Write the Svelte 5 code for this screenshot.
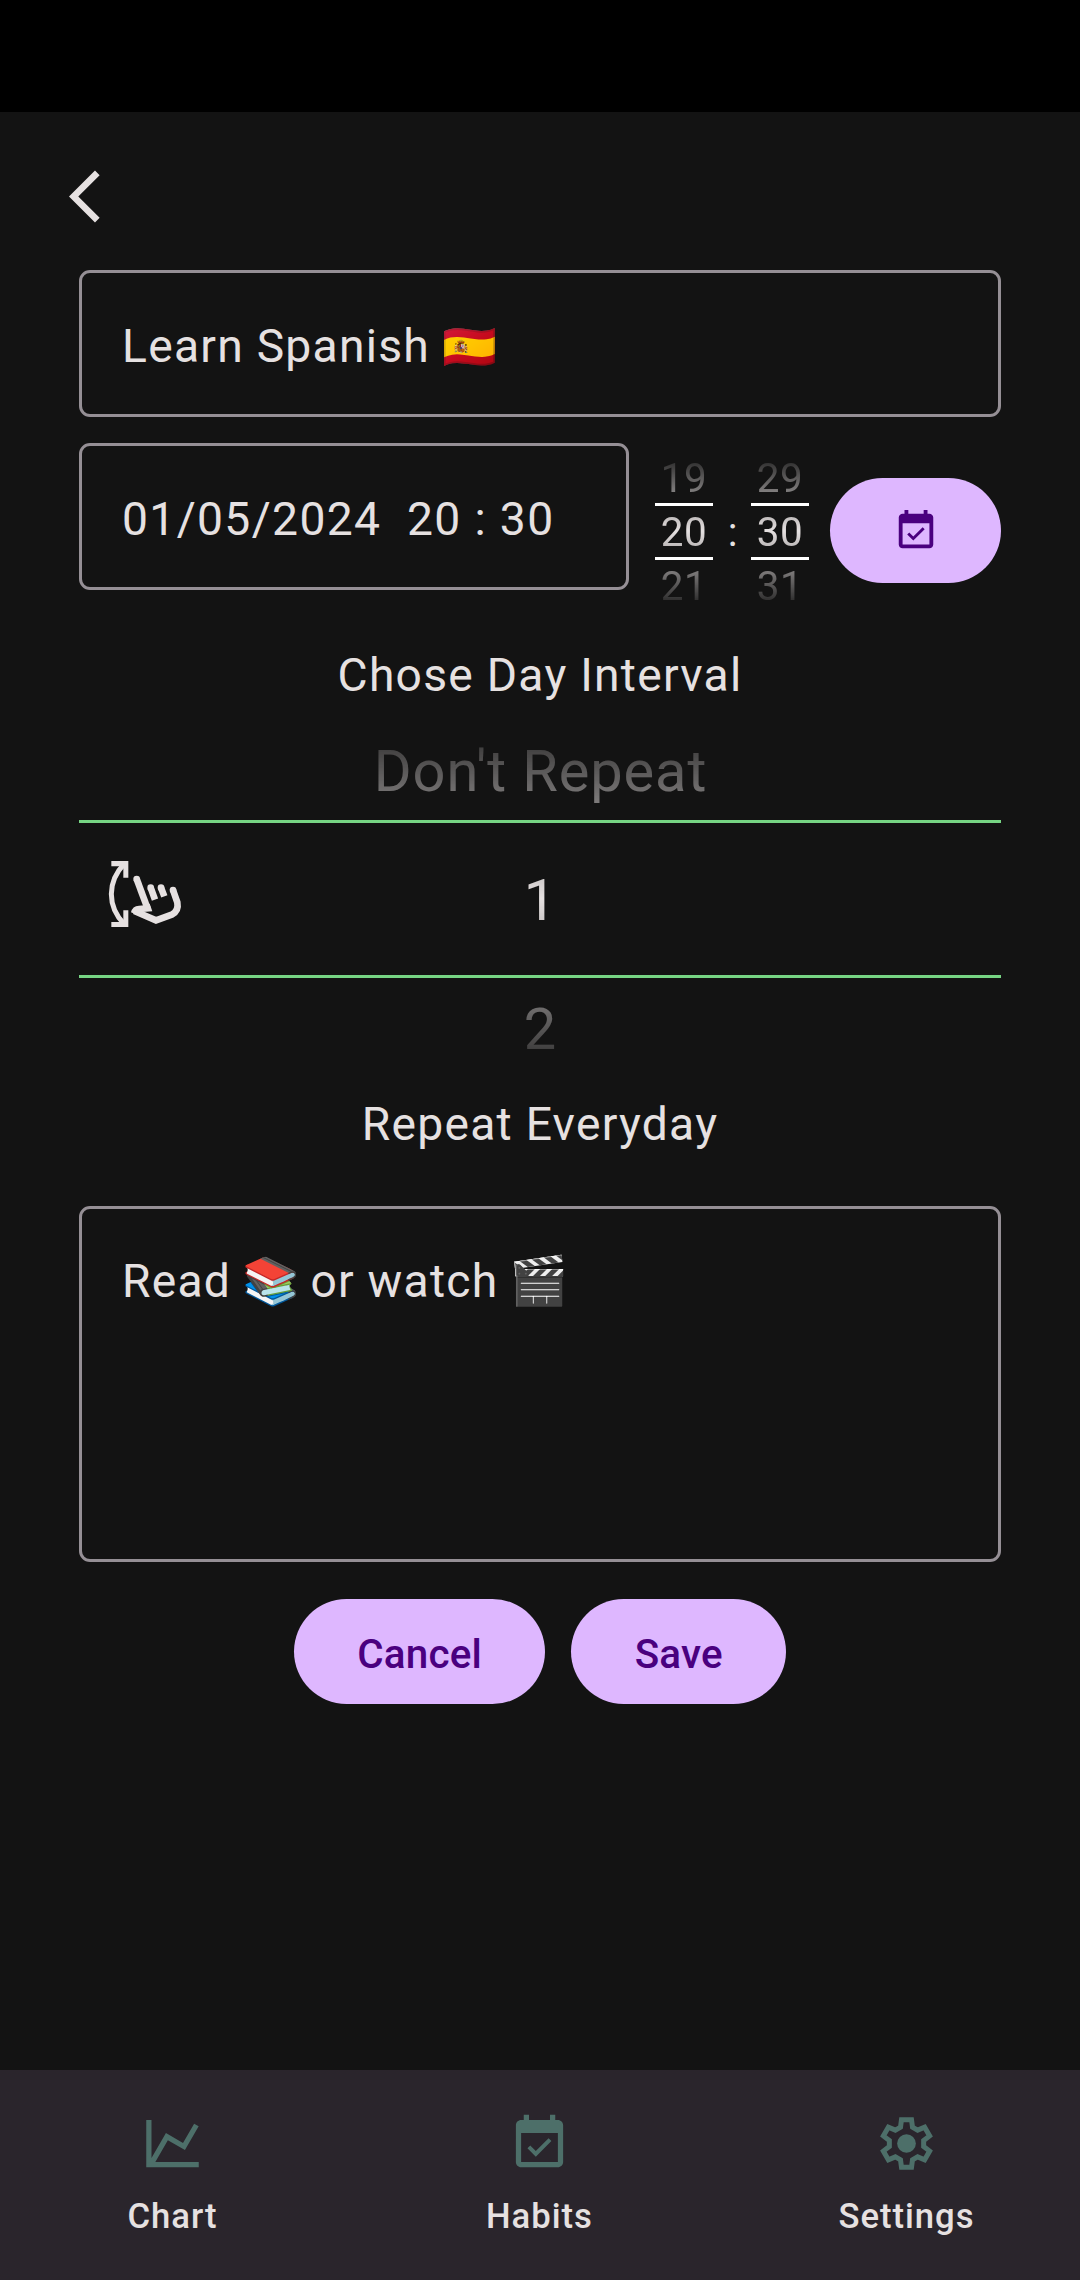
<script>
  const hours = ['19', '20', '21'];
  const minutes = ['29', '30', '31'];
  const intervals = ["Don't Repeat", '1', '2'];

  // Six-toothed gear outline, one tooth rotated in 60° steps.
  const tooth = [[-18, -49], [-15, -71.5], [15, -71.5], [18, -49]];
  const gear = [0, 60, 120, 180, 240, 300]
    .flatMap((deg) => {
      const a = (deg * Math.PI) / 180;
      return tooth.map(([x, y]) =>
        `${(x * Math.cos(a) - y * Math.sin(a)).toFixed(2)},${(x * Math.sin(a) + y * Math.cos(a)).toFixed(2)}`
      );
    })
    .join(' ');
</script>

{#snippet calendar()}
  <svg class="calendar" viewBox="0 0 24 24" fill="currentColor">
    <path d="M16.53 11.06L15.47 10l-4.88 4.88-2.12-2.12-1.06 1.06L10.59 17l5.94-5.94zM19 3h-1V1h-2v2H8V1H6v2H5c-1.11 0-1.99.9-1.99 2L3 19c0 1.1.89 2 2 2h14c1.1 0 2-.9 2-2V5c0-1.1-.9-2-2-2zm0 16H5V8h14v11z" />
  </svg>
{/snippet}

{#snippet wheel(values)}
  <div class="wheel">
    <div class="values">
      {#each values as value}<span>{value}</span>{/each}
    </div>
    <div class="window"></div>
  </div>
{/snippet}

<div class="screen">
  <div class="status"></div>
  <main>
    <button class="back" aria-label="Back">
      <svg viewBox="0 0 24 24" fill="currentColor"><path d="M11.67 3.87L9.9 2.1 0 12l9.9 9.9 1.77-1.77L3.54 12z" /></svg>
    </button>

    <div class="field title">Learn Spanish <span class="emoji flag">🇪🇸</span></div>

    <div class="when">
      <div class="field date">01/05/2024&nbsp; 20 : 30</div>
      <div class="time">
        {@render wheel(hours)}
        <span class="colon">:</span>
        {@render wheel(minutes)}
      </div>
      <button class="pill pick" aria-label="Pick date">{@render calendar()}</button>
    </div>

    <h2 class="heading">Chose Day Interval</h2>

    <div class="interval">
      {@render wheel(intervals)}
      <svg class="swipe" viewBox="140 235 230 210" fill="currentColor">
        <path d="M153 244H204V294H189V260H153Z" />
        <path d="M153 442H204V392H189V427H153Z" />
        <g fill="none" stroke="currentColor">
          <path d="M192 252C140 306 140 380 192 434" stroke-width="15" />
          <path d="M271 324L284 360M302 324L312 350" stroke-width="20" />
          <path d="M229 298L263 390" stroke-width="20" />
          <path d="M338 331L351 368Q356 394 334 405L287 422L222 394" stroke-width="20" />
        </g>
        <circle cx="229" cy="298" r="10" />
        <circle cx="271" cy="324" r="10" />
        <circle cx="302" cy="324" r="10" />
        <circle cx="338" cy="331" r="10" />
        <path d="M212 398Q216 379 236 378L252 377L268 372L276 395L248 397L226 404Z" />
      </svg>
    </div>

    <p class="heading summary">Repeat Everyday</p>

    <div class="field note">Read <span class="emoji">📚</span> or watch <span class="emoji clapper">🎬</span></div>

    <div class="actions">
      <button class="pill">Cancel</button>
      <button class="pill">Save</button>
    </div>
  </main>

  <nav>
    <div class="tab">
      <svg viewBox="0 0 24 24" fill="currentColor"><path d="M16 11.78L20.24 4.45L21.97 5.45L16.74 14.5L10.23 10.75L5.46 19H22V21H2V3H4V17.54L9.5 8L16 11.78Z" /></svg>
      <span>Chart</span>
    </div>
    <div class="tab">
      {@render calendar()}
      <span>Habits</span>
    </div>
    <div class="tab">
      <svg viewBox="-94.5 -94.5 189 189">
        <polygon points={gear} fill="none" stroke="currentColor" stroke-width="15" />
        <circle r="28" fill="currentColor" />
      </svg>
      <span>Settings</span>
    </div>
  </nav>
</div>

<style>
  :global(body) {
    background: #131313;
  }

  .screen {
    width: 1080px;
    height: 2280px;
    display: flex;
    flex-direction: column;
    background: #131313;
    color: #e6e1e1;
    font: 400 46.2px/63px Roboto, "Noto Color Emoji", sans-serif;
    letter-spacing: 1.26px;
    overflow: hidden;
  }

  svg {
    display: block;
    flex: none;
  }

  button {
    border: 0;
    padding: 0;
    background: none;
    color: inherit;
    font: inherit;
  }

  .status {
    height: 112px;
    background: #000;
  }

  main {
    flex: 1;
    display: flex;
    flex-direction: column;
    padding: 53px 79px 0;
  }

  .back {
    align-self: flex-start;
    margin-left: -10px;
    height: 63px;
  }

  .back svg {
    width: 63px;
    height: 63px;
  }

  .field {
    box-sizing: border-box;
    height: 147px;
    padding: 42px 36px 36px 40px;
    border: 3px solid #958f95;
    border-radius: 11px;
    white-space: nowrap;
  }

  .emoji {
    margin: 0 -3.5px 0 -1.5px;
  }

  .flag {
    margin-left: -0.5px;
    font-size: 44px;
  }

  .clapper {
    font-size: 47.5px;
  }

  .title {
    margin-top: 42px;
  }

  .when {
    display: flex;
    margin-top: 26px;
    height: 170px;
  }

  .date {
    width: 550px;
    letter-spacing: 1.36px;
  }

  .time {
    display: flex;
    margin: 7px 0 0 26px;
    height: 162px;
    font-size: 40.4px;
    letter-spacing: 0.6px;
  }

  .wheel {
    display: grid;
    width: 58px;
  }

  .values,
  .window {
    grid-area: 1 / 1;
  }

  .values {
    display: flex;
    flex-direction: column;
    text-align: center;
    -webkit-mask-image: linear-gradient(transparent, #000 50%, transparent);
    mask-image: linear-gradient(transparent, #000 50%, transparent);
  }

  .values span {
    height: 54px;
    line-height: 58px;
  }

  .window {
    align-self: center;
    box-sizing: border-box;
    height: 57px;
    border: solid #fff;
    border-width: 3px 0;
  }

  .colon {
    box-sizing: border-box;
    width: 38px;
    padding-left: 2px;
    line-height: 166px;
    text-align: center;
  }

  .pill {
    box-sizing: border-box;
    height: 105px;
    padding: 5px 63.3px 0;
    border-radius: 53px;
    background: #deb7ff;
    color: #4a007f;
    font-weight: 500;
    font-size: 40.4px;
    letter-spacing: 0.2px;
  }

  .pick {
    display: flex;
    align-items: center;
    justify-content: center;
    width: 171px;
    margin: 35px 0 0 21px;
    padding: 0;
  }

  .pick :global(.calendar) {
    width: 46px;
    height: 46px;
  }

  .heading {
    height: 61px;
    margin: 31px 0 0;
    font: inherit;
    text-align: center;
  }

  .interval {
    display: grid;
    height: 387px;
  }

  .interval > .swipe {
    grid-area: 1 / 1;
    align-self: center;
    width: 76.67px;
    height: 70px;
    margin: -11px 0 0 28px;
  }

  .interval .wheel {
    grid-area: 1 / 1;
    width: 922px;
    font-size: 57.75px;
    letter-spacing: 0.9px;
    text-indent: 1px;
  }

  .interval .values span {
    height: 129px;
    line-height: 132px;
  }

  .interval .window {
    height: 158px;
    border-color: #77d584;
  }

  .summary {
    margin-top: 1px;
  }

  .note {
    margin-top: 52px;
    height: 356px;
    padding-top: 41px;
  }

  .actions {
    display: flex;
    justify-content: center;
    gap: 26px;
    margin-top: 37px;
  }

  nav {
    display: grid;
    grid-template-columns: repeat(3, 1fr);
    column-gap: 21px;
    height: 210px;
    background: #2a252c;
    font-weight: 500;
    font-size: 34.65px;
    line-height: 46px;
    letter-spacing: 1px;
  }

  .tab {
    display: flex;
    flex-direction: column;
    align-items: center;
    padding: 42px 1px 0 0;
    gap: 18px;
  }

  .tab svg {
    width: 63px;
    height: 63px;
    color: #4d6f69;
  }
</style>
